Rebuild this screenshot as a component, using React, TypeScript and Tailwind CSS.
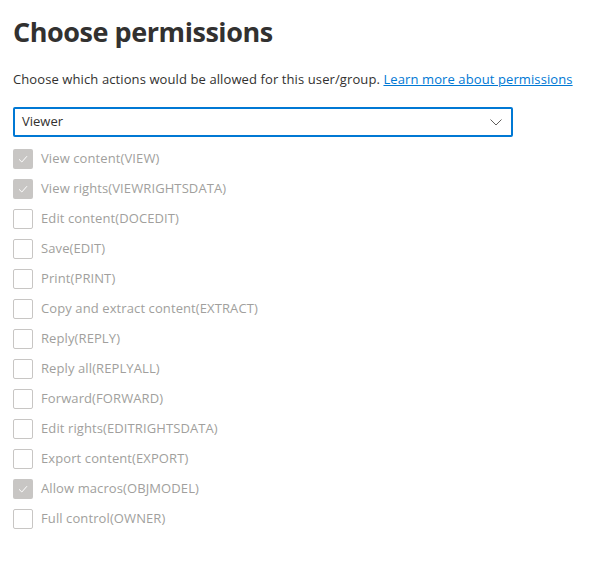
import React from 'react';

const permissions = [
  { label: 'View content(VIEW)', checked: true },
  { label: 'View rights(VIEWRIGHTSDATA)', checked: true },
  { label: 'Edit content(DOCEDIT)', checked: false },
  { label: 'Save(EDIT)', checked: false },
  { label: 'Print(PRINT)', checked: false },
  { label: 'Copy and extract content(EXTRACT)', checked: false },
  { label: 'Reply(REPLY)', checked: false },
  { label: 'Reply all(REPLYALL)', checked: false },
  { label: 'Forward(FORWARD)', checked: false },
  { label: 'Edit rights(EDITRIGHTSDATA)', checked: false },
  { label: 'Export content(EXPORT)', checked: false },
  { label: 'Allow macros(OBJMODEL)', checked: true },
  { label: 'Full control(OWNER)', checked: false },
];

function Checkbox({ checked }: { checked: boolean }) {
  if (checked) {
    return (
      <div className="w-5 h-5 rounded-[2px] bg-[#c8c6c4] flex items-center justify-center shrink-0">
        <svg width="12" height="12" viewBox="0 0 12 12" fill="none">
          <path d="M2 6.3 L4.8 9 L10 3.2" stroke="#ffffff" strokeWidth="1" />
        </svg>
      </div>
    );
  }
  return <div className="w-5 h-5 rounded-[2px] border border-[#c8c6c4] bg-white shrink-0" />;
}

export default function App() {
  return (
    <div
      className="w-[592px] h-[566px] bg-white px-[13px] pt-[14px] text-[#323130]"
      style={{ fontFamily: '"Open Sans", "Noto Sans", sans-serif' }}
    >
      <h1 className="text-[27px] font-bold leading-[36px] tracking-[-0.45px]">Choose permissions</h1>

      <p className="mt-[20px] text-[13px] leading-[18px] tracking-[0.1px]">
        Choose which actions would be allowed for this user/group.{' '}
        <a href="#" className="text-[#0078d4] underline">Learn more about permissions</a>
      </p>

      {/* ドロップダウン */}
      <div className="mt-[19px] w-[500px] h-[30px] border-2 border-[#0078d4] rounded-[2px] flex items-center justify-between pl-[7px] pr-[8px]">
        <span className="text-[13px]">Viewer</span>
        <svg width="14" height="14" viewBox="0 0 14 14" fill="none">
          <path d="M1.5 4.5 L7 10 L12.5 4.5" stroke="#605e5c" strokeWidth="1" />
        </svg>
      </div>

      {/* 権限一覧 */}
      <div className="mt-[12px] flex flex-col gap-[10px]">
        {permissions.map((p) => (
          <div key={p.label} className="flex items-center gap-2 h-5">
            <Checkbox checked={p.checked} />
            <span className="text-[13px] tracking-[0.1px] text-[#a19f9d]">{p.label}</span>
          </div>
        ))}
      </div>
    </div>
  );
}
